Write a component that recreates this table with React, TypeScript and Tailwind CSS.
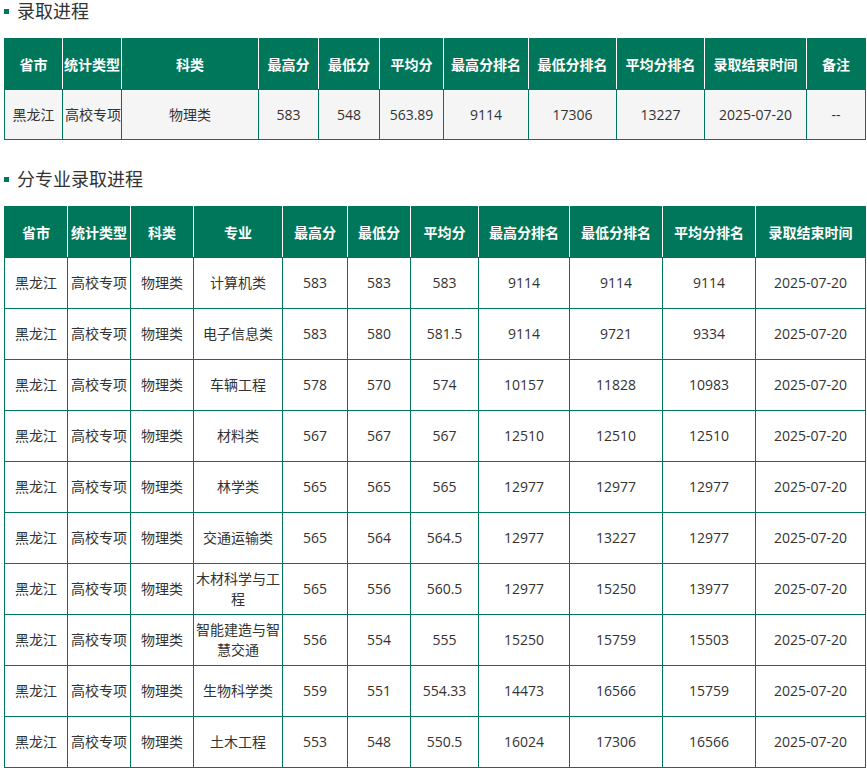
import React from "react";

const rows2 = [
  ["计算机类", "583", "583", "583", "9114", "9114", "9114"],
  ["电子信息类", "583", "580", "581.5", "9114", "9721", "9334"],
  ["车辆工程", "578", "570", "574", "10157", "11828", "10983"],
  ["材料类", "567", "567", "567", "12510", "12510", "12510"],
  ["林学类", "565", "565", "565", "12977", "12977", "12977"],
  ["交通运输类", "565", "564", "564.5", "12977", "13227", "12977"],
  ["木材科学与工程", "565", "556", "560.5", "12977", "15250", "13977"],
  ["智能建造与智慧交通", "556", "554", "555", "15250", "15759", "15503"],
  ["生物科学类", "559", "551", "554.33", "14473", "16566", "15759"],
  ["土木工程", "553", "548", "550.5", "16024", "17306", "16566"],
];

const head1 = ["省市", "统计类型", "科类", "最高分", "最低分", "平均分", "最高分排名", "最低分排名", "平均分排名", "录取结束时间", "备注"];
const body1 = ["黑龙江", "高校专项", "物理类", "583", "548", "563.89", "9114", "17306", "13227", "2025-07-20", "--"];
const head2 = ["省市", "统计类型", "科类", "专业", "最高分", "最低分", "平均分", "最高分排名", "最低分排名", "平均分排名", "录取结束时间"];

function Title({ text }: { text: string }) {
  return (
    <div className="flex items-center h-[22px] pl-[4px]">
      <span className="w-[5px] h-[5px] bg-[#00775a] mr-[8px]" />
      <span className="text-[18px] leading-[22px] text-[#333]">{text}</span>
    </div>
  );
}

function Th({ text, first, last }: { text: string; first?: boolean; last?: boolean }) {
  return (
    <th
      className={
        "h-[51px] px-0 font-bold text-white text-[14px] text-center align-middle whitespace-nowrap border border-[#00775a] " +
        (first ? "border-r-white " : last ? "border-l-white " : "border-x-white ")
      }
    >
      {text}
    </th>
  );
}

function Td({ text, cls }: { text: string; cls: string }) {
  return (
    <td className={"px-[2px] text-center align-middle text-[14px] leading-[20px] text-[#333] border border-[#00775a] " + cls}>
      {text}
    </td>
  );
}

export default function App() {
  return (
    <div className="w-[867px] h-[770px] overflow-hidden bg-white font-['Open_Sans','Noto_Sans_CJK_SC',sans-serif]">
      <Title text="录取进程" />
      <table className="mt-[16px] ml-[4px] w-[861px] table-fixed border-collapse">
        <colgroup>
          <col className="w-[58px]" />
          <col className="w-[59px]" />
          <col className="w-[137px]" />
          <col className="w-[60px]" />
          <col className="w-[61px]" />
          <col className="w-[64px]" />
          <col className="w-[85px]" />
          <col className="w-[88px]" />
          <col className="w-[88px]" />
          <col className="w-[102px]" />
          <col className="w-[59px]" />
        </colgroup>
        <thead>
          <tr className="bg-[#00775a]">
            {head1.map((h, i) => (
              <Th key={i} text={h} first={i === 0} last={i === head1.length - 1} />
            ))}
          </tr>
        </thead>
        <tbody>
          <tr>
            {body1.map((c, i) => (
              <Td key={i} text={c} cls="h-[50px] bg-[#f5f5f5] whitespace-nowrap px-0" />
            ))}
          </tr>
        </tbody>
      </table>

      <div className="mt-[28px]">
        <Title text="分专业录取进程" />
      </div>
      <table className="mt-[16px] ml-[4px] w-[861px] table-fixed border-collapse">
        <colgroup>
          <col className="w-[63px]" />
          <col className="w-[63px]" />
          <col className="w-[63px]" />
          <col className="w-[89px]" />
          <col className="w-[65px]" />
          <col className="w-[63px]" />
          <col className="w-[68px]" />
          <col className="w-[91px]" />
          <col className="w-[93px]" />
          <col className="w-[93px]" />
          <col className="w-[110px]" />
        </colgroup>
        <thead>
          <tr className="bg-[#00775a]">
            {head2.map((h, i) => (
              <Th key={i} text={h} first={i === 0} last={i === head2.length - 1} />
            ))}
          </tr>
        </thead>
        <tbody>
          {rows2.map((r, ri) => (
            <tr key={ri}>
              {["黑龙江", "高校专项", "物理类", ...r, "2025-07-20"].map((c, i) => (
                <Td key={i} text={c} cls="h-[51px] bg-white" />
              ))}
            </tr>
          ))}
        </tbody>
      </table>
    </div>
  );
}
